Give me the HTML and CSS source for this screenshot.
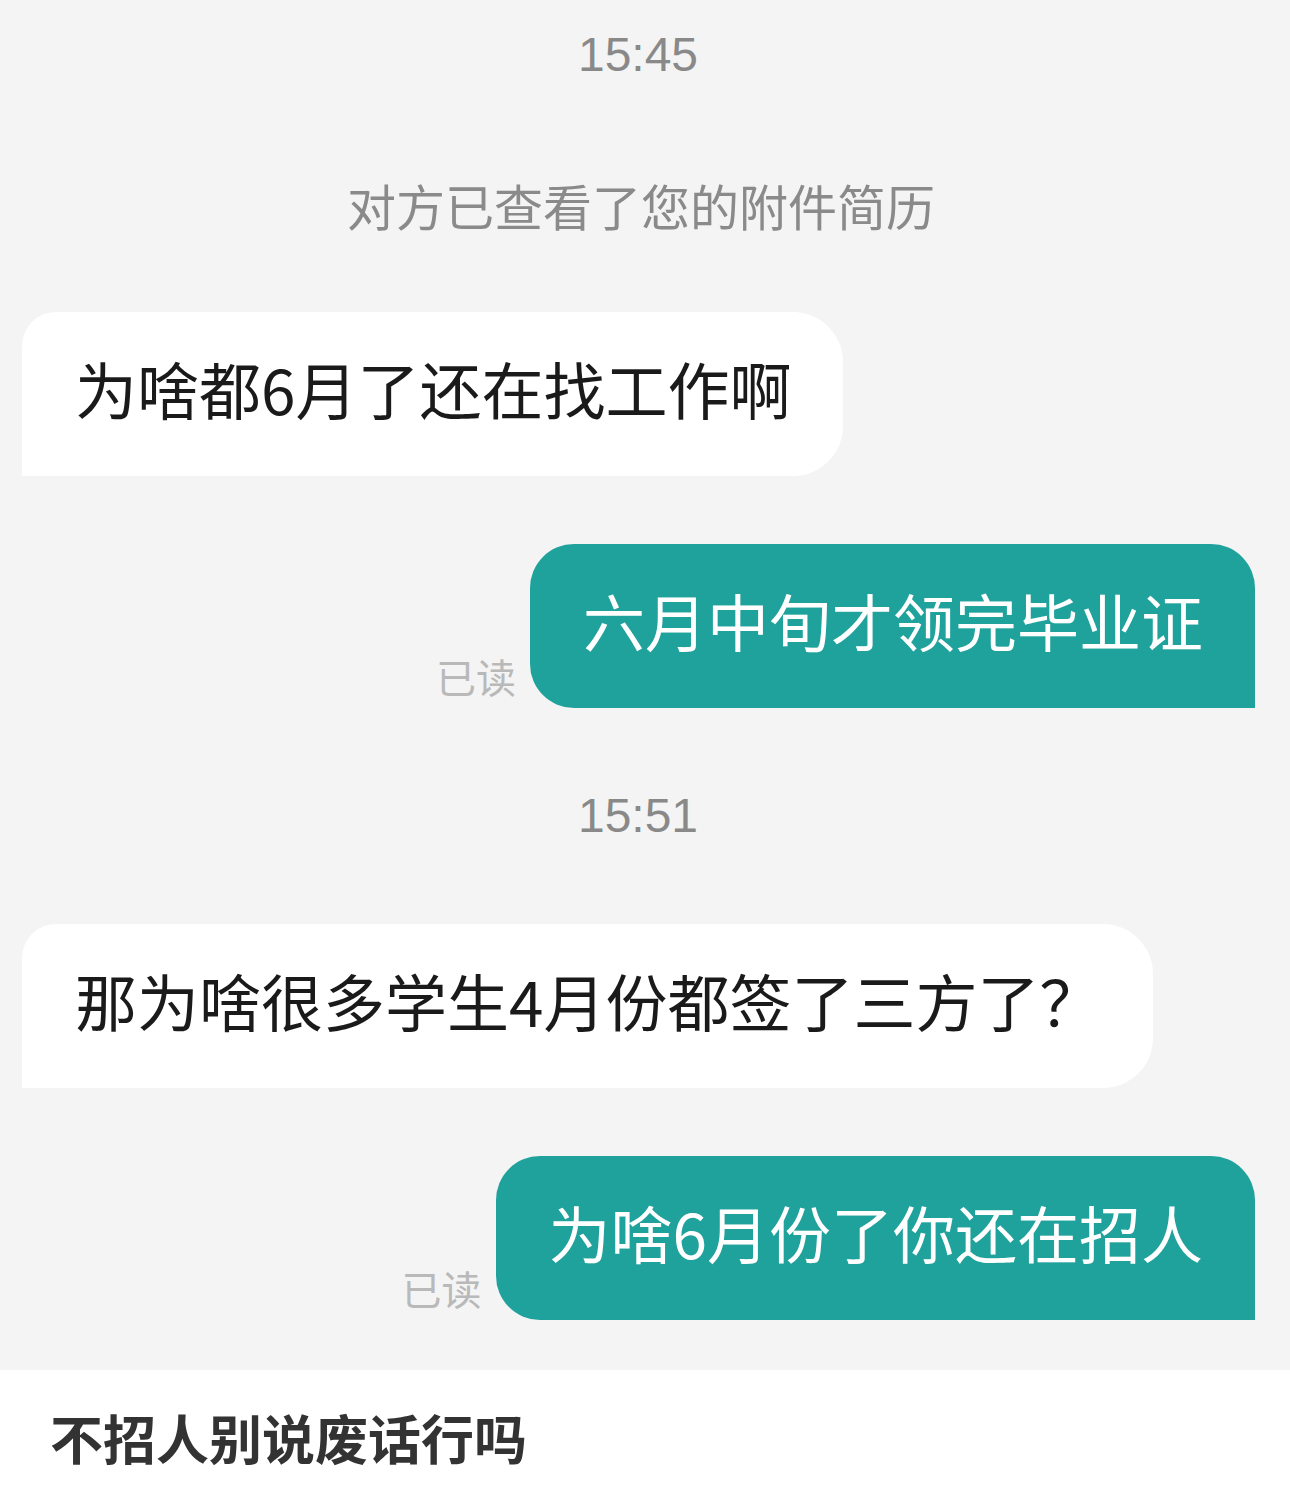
FILE: index.html
```html
<!DOCTYPE html>
<html lang="zh-CN">
<head>
  <meta charset="UTF-8" />
  <title>聊天记录</title>
  <link rel="stylesheet" href="styles.css">
</head>
<body>
  <div class="chat">
    <div class="time">15:45</div>
    <div class="notice">对方已查看了您的附件简历</div>

    <div class="row left">
      <div class="bubble">为啥都6月了还在找工作啊</div>
    </div>

    <div class="row right first">
      <span class="read">已读</span>
      <div class="bubble">六月中旬才领完毕业证</div>
    </div>

    <div class="time later">15:51</div>

    <div class="row left after-time">
      <div class="bubble">那为啥很多学生4月份都签了三方了？</div>
    </div>

    <div class="row right first">
      <span class="read">已读</span>
      <div class="bubble">为啥6月份了你还在招人</div>
    </div>
  </div>

  <p class="caption">不招人别说废话行吗</p>
</body>
</html>
```

FILE: styles.css
```css
body { margin: 0; background: #fff; font-family: "Noto Sans CJK SC", "Noto Sans", sans-serif; }

.chat { background: #f4f4f4; padding-bottom: 50px; }

.time { height: 110px; line-height: 110px; text-align: center; padding-right: 14px; font-family: "Liberation Sans", "Noto Sans CJK SC", sans-serif; font-size: 48px; color: #898989; }
.time.later { height: 90px; line-height: 90px; margin-top: 63px; }
.notice { margin-top: 50px; height: 90px; line-height: 90px; text-align: center; padding-right: 8px; font-size: 49px; color: #8a8a8a; }

.row { display: flex; align-items: flex-end; margin-top: 62px; }
.row.first { margin-top: 68px; }
.row.after-time { margin-top: 63px; }
.row.left { justify-content: flex-start; padding-left: 22px; }
.row.right { justify-content: flex-end; padding-right: 35px; gap: 14px; }

.bubble { height: 164px; line-height: 152px; font-size: 62px; padding: 0 52px 0 53px; white-space: nowrap; }
.left .bubble { background: #fff; color: #1a1a1a; border-radius: 34px 50px 50px 0; }
.right .bubble { background: #1fa29c; color: #fff; border-radius: 44px 44px 0 44px; }

.read { font-size: 40px; line-height: 40px; color: #b9b9b9; margin-bottom: 12px; }

.caption { margin: 0; height: 127px; line-height: 134px; padding-left: 50px; font-size: 53px; font-weight: bold; color: #333; }
```
